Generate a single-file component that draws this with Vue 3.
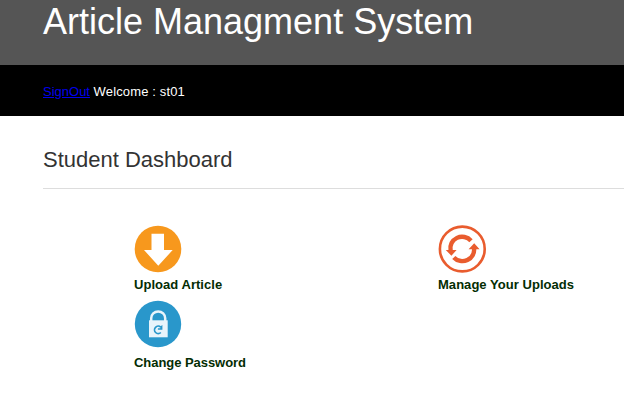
<script setup>
const user = 'st01'
</script>

<template>
  <div class="page">
    <header class="banner"><h1>Article Managment System</h1></header>
    <nav class="bar"><a href="#">SignOut</a> <span>Welcome : {{ user }}</span></nav>
    <main>
      <h2>Student Dashboard</h2>
      <div class="grid">
        <div class="item">
          <svg width="48" height="48" viewBox="0 0 48 48">
            <circle cx="24" cy="24" r="23.3" fill="#f7981d" />
            <path d="M17.5 8.8H30V25H38.7L24.3 40.7L10 25H17.5Z" fill="#fff" />
          </svg>
          <div class="label">Upload Article</div>
        </div>
        <div class="item">
          <svg width="48" height="48" viewBox="0 0 48 48">
            <g fill="none" stroke="#e95c2e">
              <circle cx="24.3" cy="24" r="22.4" stroke-width="2.6" />
              <path d="M12.6 25.5A11.7 11.5 0 0 1 33 15.8" stroke-width="4.4" />
              <path d="M36 23A11.7 11.5 0 0 1 15.8 32.4" stroke-width="4.4" />
            </g>
            <path d="M7.8 25H18.6L13.4 30.8ZM30.6 24.2H41.6L36.2 18.2Z" fill="#e95c2e" />
          </svg>
          <div class="label">Manage Your Uploads</div>
        </div>
        <div class="item">
          <svg width="48" height="48" viewBox="0 0 48 48">
            <circle cx="24" cy="24" r="23.2" fill="#2997cb" />
            <path d="M17.2 21V18.3A7 6.9 0 0 1 31.2 18.3V21" fill="none" stroke="#e8f4fb" stroke-width="2.5" />
            <path d="M15 20.3H33.7V37.3H15Z" fill="#e8f4fb" />
            <path d="M26.8 32.5A3.7 3.7 0 1 1 26.7 27.1" fill="none" stroke="#2997cb" stroke-width="1.7" />
            <path d="M28.4 25V29.7H23.9V28.3H26.3V26.5Z" fill="#2997cb" />
          </svg>
          <div class="label low">Change Password</div>
        </div>
      </div>
    </main>
  </div>
</template>

<style>
body { background: #fff; overflow: hidden; }
</style>

<style scoped>
.page {
  height: 404px;
  overflow: hidden;
  font-family: "Liberation Sans", Arial, sans-serif;
  font-size: 13px;
}
.banner {
  height: 65px;
  padding-left: 43px;
  box-sizing: border-box;
  background: #555;
  color: #fff;
}
h1 {
  margin: 0;
  font-size: 36px;
  font-weight: 400;
  line-height: 44px;
  white-space: nowrap;
}
.bar {
  height: 51px;
  padding-left: 43px;
  box-sizing: border-box;
  background: #000;
  color: #fff;
  line-height: 53px;
}
.bar a { color: #00e; }
.bar span { letter-spacing: 0.14px; }
main { padding-left: 43px; }
h2 {
  height: 73px;
  margin: 0;
  padding-top: 30px;
  box-sizing: border-box;
  border-bottom: 1px solid #ddd;
  color: #333;
  font-size: 22px;
  font-weight: 400;
  line-height: 27px;
}
.grid {
  display: grid;
  grid-template-columns: 304px 1fr;
  grid-template-rows: 75px 75px;
  padding: 36px 0 0 91px;
}
svg { display: block; }
.label {
  padding-top: 4px;
  color: #032d03;
  font-weight: 700;
  line-height: 15px;
  letter-spacing: 0.04px;
}
.low {
  padding-top: 7px;
  letter-spacing: -0.05px;
}
</style>
